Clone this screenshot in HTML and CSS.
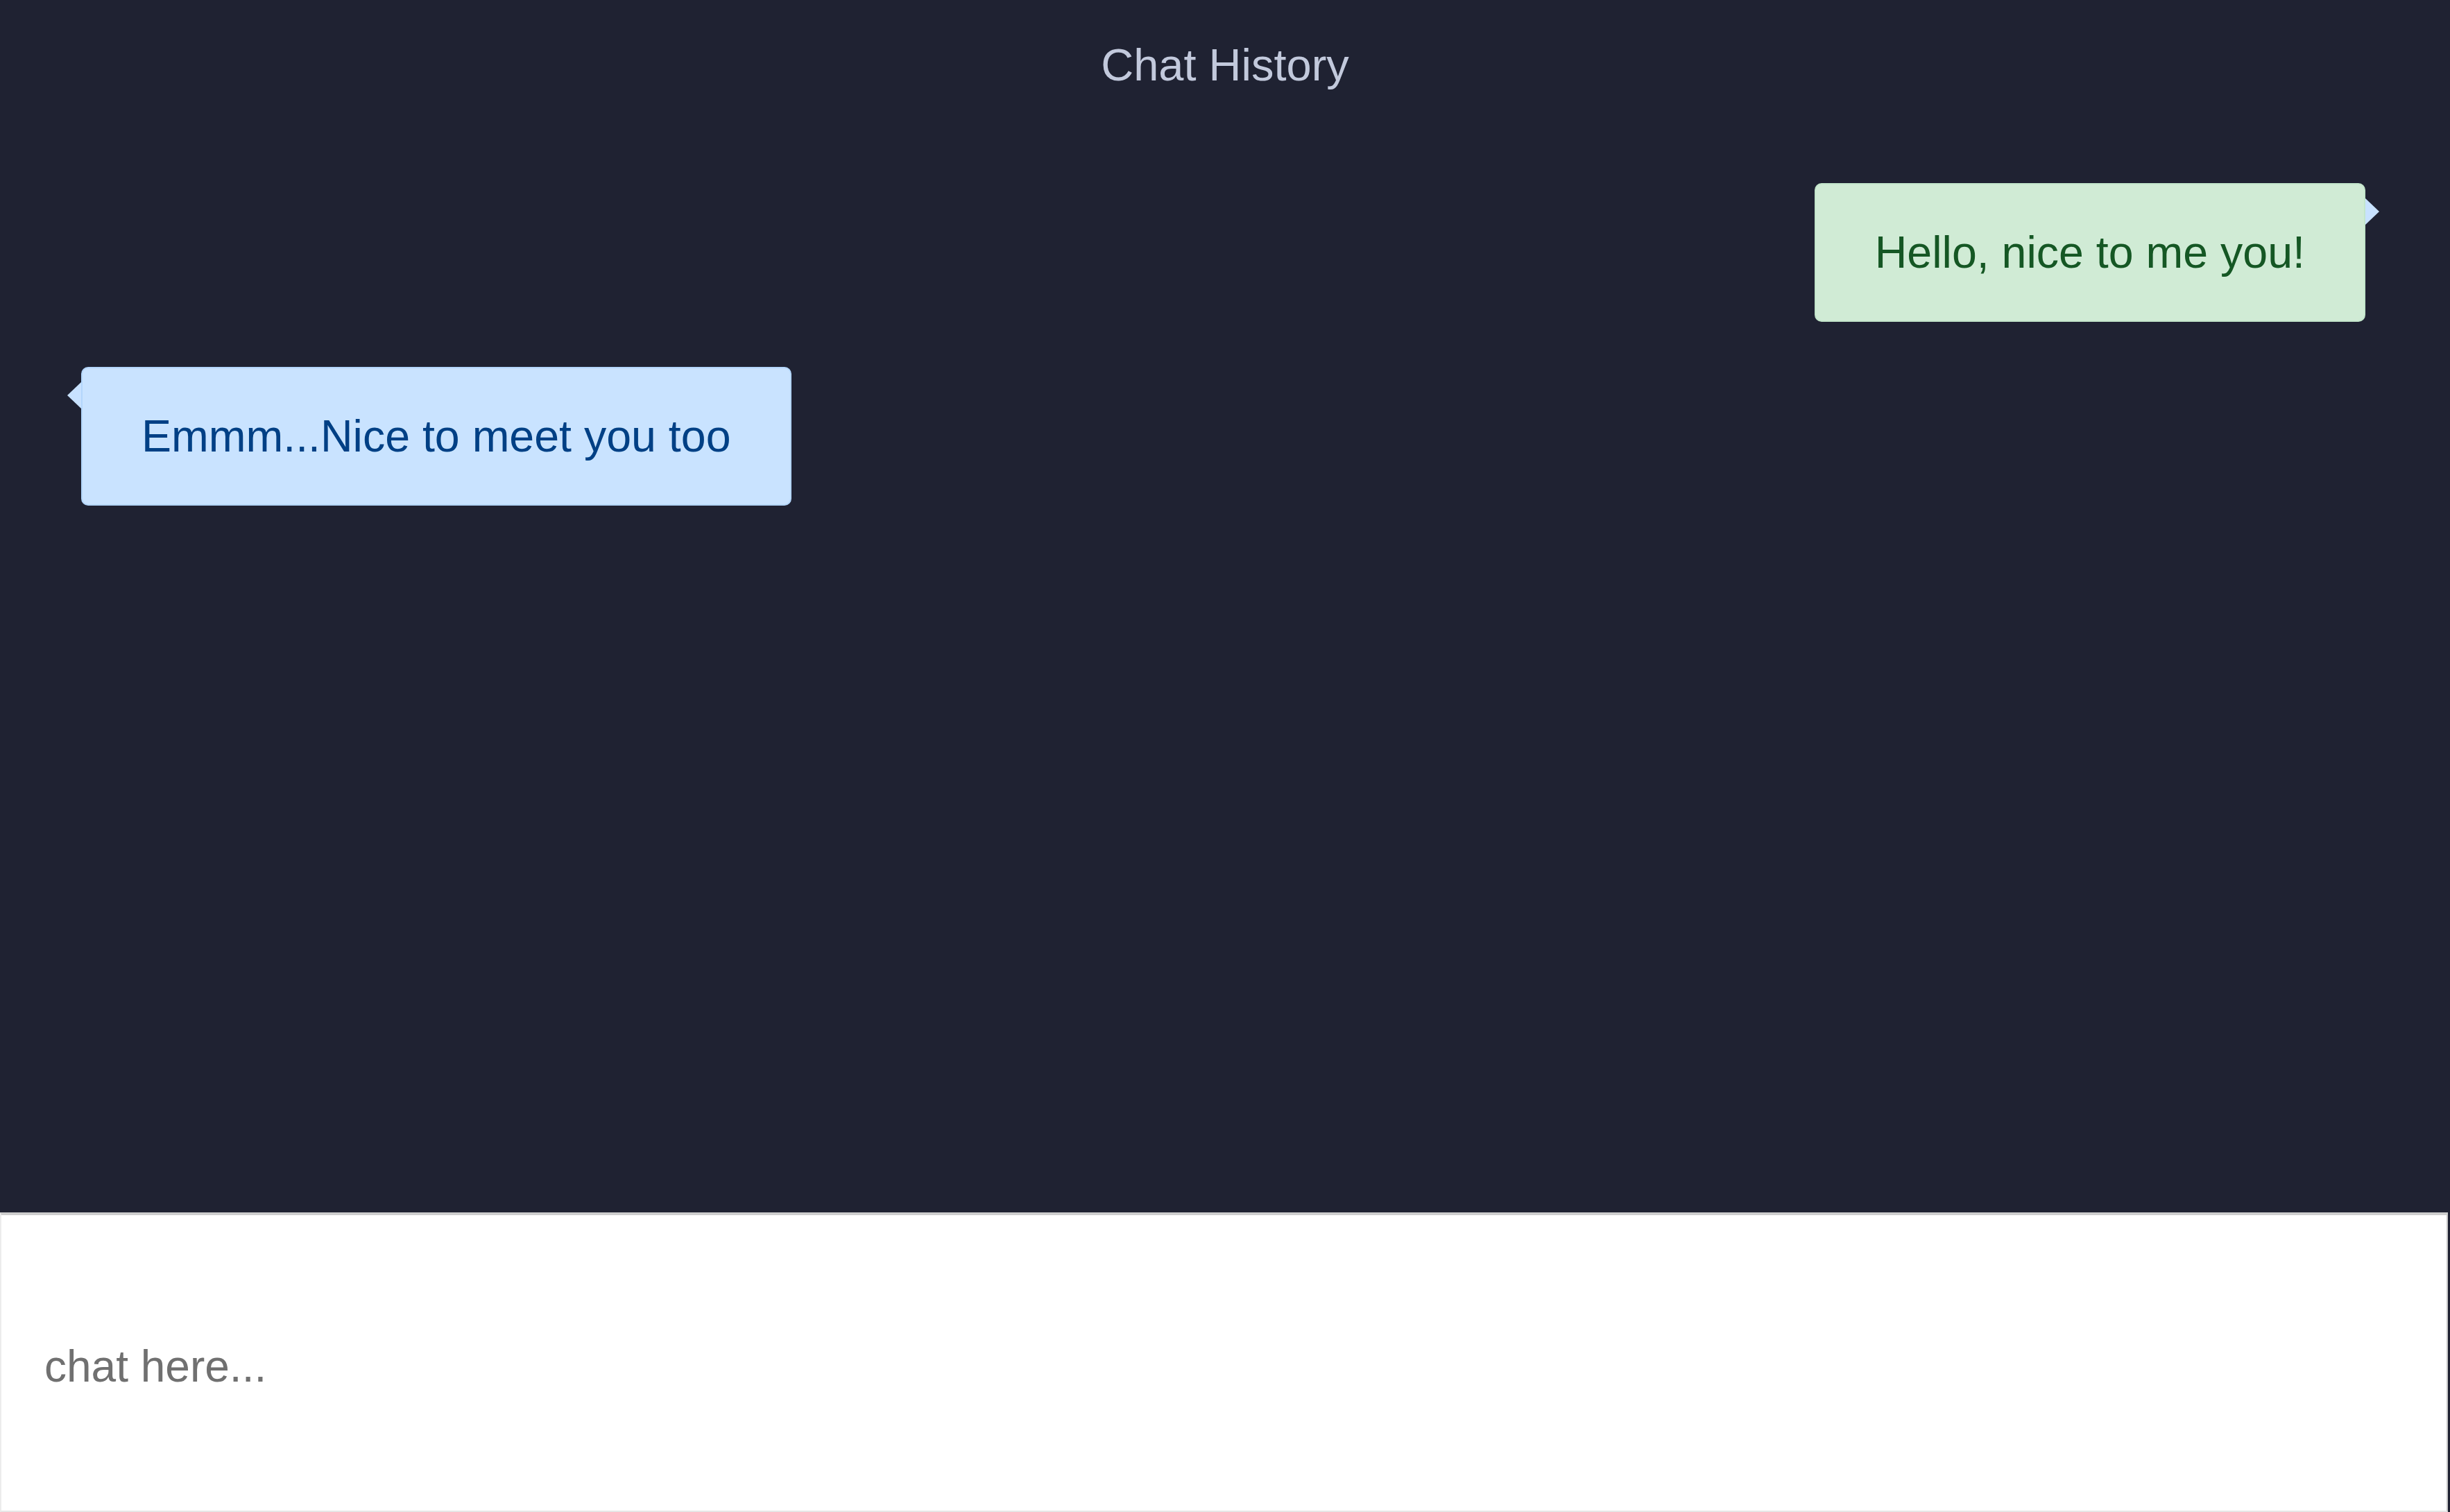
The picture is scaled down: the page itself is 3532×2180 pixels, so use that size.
FILE: index.html
```html
<!DOCTYPE html>
<html lang="en">
<head>
<meta charset="utf-8">
<title>Chat History</title>
<link rel="stylesheet" href="styles.css">
</head>
<body>
  <div class="app">
    <section class="history">
      <h1 class="title">Chat History</h1>
      <div class="messages">
        <div class="bubble sent">Hello, nice to me you!</div>
        <div class="bubble received">Emmm...Nice to meet you too</div>
      </div>
    </section>
    <div class="composer">
      <textarea class="input" placeholder="chat here..."></textarea>
    </div>
  </div>
</body>
</html>
```

FILE: styles.css
```css
html, body {
  margin: 0;
  padding: 0;
  height: 100%;
  overflow: hidden;
}

body {
  background: #1f2232;
  font-family: "Liberation Sans", Arial, sans-serif;
}

.app {
  display: flex;
  flex-direction: column;
  height: 100vh;
}

.history {
  flex: 1;
  display: flex;
  flex-direction: column;
  padding-top: 46px;
}

.title {
  margin: 0;
  text-align: center;
  font-size: 65px;
  line-height: 96px;
  font-weight: normal;
  color: #c2c9dc;
}

.messages {
  display: flex;
  flex-direction: column;
  gap: 65px;
  margin-top: 122px;
  padding: 0 122px 0 117px;
}

.bubble {
  position: relative;
  font-size: 64.5px;
  line-height: 96px;
  padding: 50px 85px;
  border: 2px solid;
  border-radius: 10px;
  white-space: nowrap;
}

.bubble::before {
  content: "";
  position: absolute;
  top: 20px;
  border-top: 19px solid transparent;
  border-bottom: 19px solid transparent;
}

.sent {
  align-self: flex-end;
  background: #d0ebd5;
  border-color: #c3e6cb;
  color: #155724;
}

.sent::before {
  right: -22px;
  border-left: 20px solid #c8e2ff;
}

.received {
  align-self: flex-start;
  background: #c9e3ff;
  border-color: #b3d6fc;
  color: #004085;
}

.received::before {
  left: -22px;
  border-right: 20px solid #c8e2ff;
}

.composer {
  height: 432px;
  display: flex;
  padding-right: 3px;
}

.input {
  flex: 1;
  box-sizing: border-box;
  margin: 0;
  height: 100%;
  resize: none;
  background: #ffffff;
  border-style: solid;
  border-width: 4px 2px 2px 2px;
  border-color: #cdcdcd #c9c9c9 #e6e6e6 #ececec;
  padding: 170px 60px 0 62px;
  font-family: "Liberation Sans", Arial, sans-serif;
  font-size: 64px;
  line-height: 96px;
  color: #333;
  outline: none;
}

.input::placeholder {
  color: #707070;
}
```
